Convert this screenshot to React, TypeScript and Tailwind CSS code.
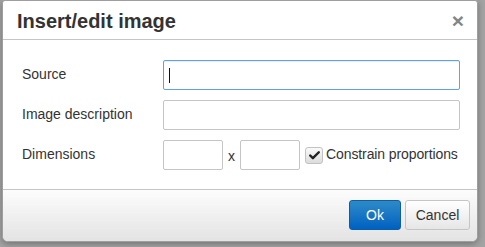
import { Check } from 'lucide-react'

export default function App() {
  return (
    <div
      className="h-[247px] w-[485px] overflow-hidden bg-[#a3a3a3] pl-[2px] pr-[7px] pb-[5px]"
      style={{ fontFamily: '"Liberation Sans", Arial, sans-serif' }}
    >
      <div className="flex h-[242px] w-[476px] flex-col overflow-hidden rounded-b-[6px] rounded-t-[3px] border border-[#9e9e9e] bg-white shadow-[0_2px_6px_rgba(0,0,0,0.3)]">
        {/* header */}
        <div className="flex h-[39px] shrink-0 items-center justify-between border-b border-[#c5c5c5] pl-[14px] pr-[13px]">
          <h1 className="pt-[1px] text-[20px] font-bold leading-none text-[#333]">
            Insert/edit image
          </h1>
          <span className="text-[21px] font-bold leading-none text-[#858585]">
            ×
          </span>
        </div>

        {/* body */}
        <div className="flex flex-1 flex-col gap-[10px] pl-[19px] pt-[20px]">
          <div className="flex items-center">
            <label className="w-[141px] pb-[1px] text-[14px] text-[#333]">Source</label>
            <div className="flex h-[30px] w-[297px] items-center rounded-[2px] border border-[#59a5e5] bg-white px-[5px] shadow-[inset_0_1px_1px_rgba(0,0,0,0.08)]">
              <span className="h-[15px] w-px bg-[#111]" />
            </div>
          </div>
          <div className="flex items-center">
            <label className="w-[141px] pb-[1px] text-[14px] text-[#333]">
              Image description
            </label>
            <div className="h-[30px] w-[297px] rounded-[2px] border border-[#c5c5c5] bg-white" />
          </div>
          <div className="flex items-center">
            <label className="w-[141px] pb-[1px] text-[14px] text-[#333]">Dimensions</label>
            <div className="h-[30px] w-[60px] rounded-[2px] border border-[#c5c5c5] bg-white" />
            <span className="w-[17px] pt-[2px] text-center text-[14px] text-[#333]">x</span>
            <div className="h-[30px] w-[60px] rounded-[2px] border border-[#c5c5c5] bg-white" />
            <div className="ml-[5px] flex h-[17px] w-[18px] items-center justify-center rounded-[3px] border border-[#c2c2c2] bg-gradient-to-b from-[#fafafa] to-[#dcdcdc]">
              <Check className="h-[13px] w-[13px] text-[#222]" strokeWidth={4.5} />
            </div>
            <span className="ml-[3px] pb-[1px] text-[14px] tracking-[-0.1px] text-[#333]">
              Constrain proportions
            </span>
          </div>
        </div>

        {/* footer */}
        <div className="flex h-[52px] shrink-0 items-start justify-end gap-[4px] border-t border-[#c5c5c5] bg-gradient-to-b from-[#fdfdfd] to-[#e3e3e3] pr-[7px] pt-[10px]">
          <button className="h-[30px] w-[52px] rounded-[3px] border border-[#0b5da8] bg-gradient-to-b from-[#2d8ac7] to-[#0061c1] text-[14px] text-white">
            Ok
          </button>
          <button className="h-[30px] w-[65px] rounded-[3px] border border-[#c5c5c5] bg-gradient-to-b from-[#ffffff] to-[#e6e6e6] text-[14px] text-[#333]">
            Cancel
          </button>
        </div>
      </div>
    </div>
  )
}
